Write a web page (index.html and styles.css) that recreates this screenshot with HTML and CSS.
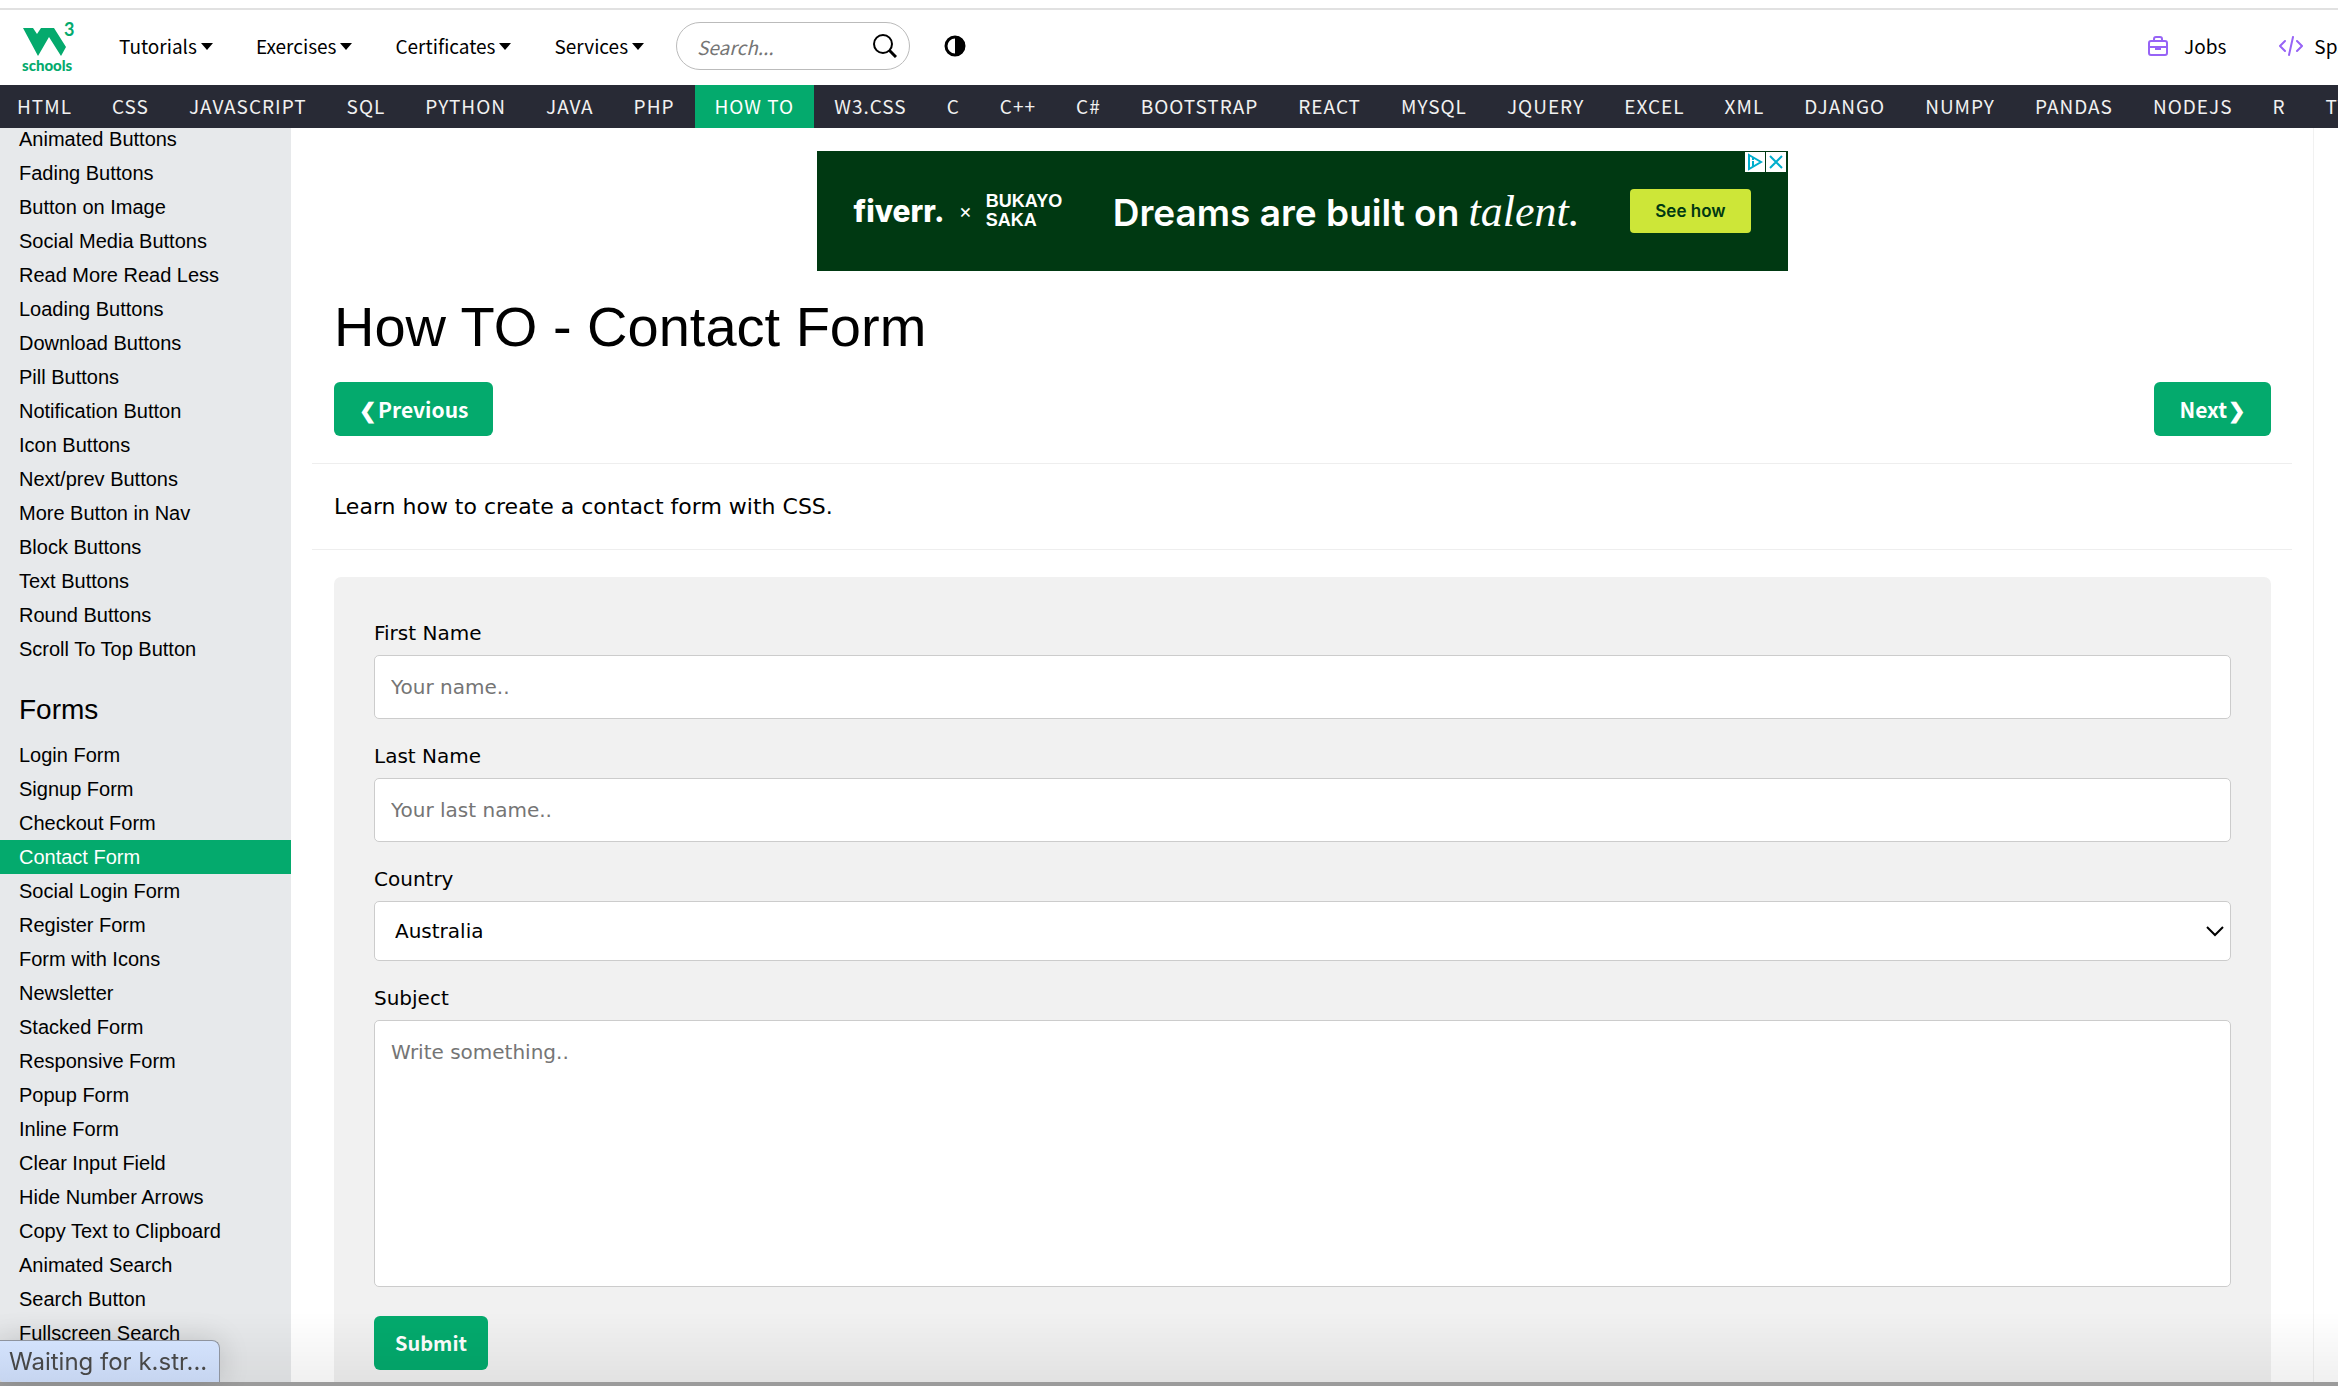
FILE: index.html
```html
<!DOCTYPE html>
<html lang="en">
<head>
<meta charset="utf-8">
<title>How To Create a Contact Form</title>
<link rel="stylesheet" href="styles.css">
</head>
<body>
<header class="topbar">
  <a href="#" class="logo" aria-label="W3Schools home">
    <svg width="56" height="60" viewBox="0 -4 56 60" fill="currentColor">
      <path d="M3 8h10l4 6 4-6h13l12 19-5 9-12-19-11 19z"/>
      <text x="44" y="16" class="logo-three">3</text>
      <text x="2" y="51" class="logo-name">schools</text>
    </svg>
  </a>
  <nav class="menu">
    <a href="#">Tutorials<i class="caret"></i></a>
    <a href="#">Exercises<i class="caret"></i></a>
    <a href="#">Certificates<i class="caret"></i></a>
    <a href="#">Services<i class="caret"></i></a>
  </nav>
  <form class="search">
    <input type="text" placeholder="Search..." aria-label="Search">
    <button type="button" aria-label="Search">
      <svg width="24" height="24" viewBox="0 0 24 24" fill="none" stroke="currentColor"><circle cx="10" cy="10" r="9" stroke-width="2"/><path d="M16 16l7 7" stroke-width="3"/></svg>
    </button>
  </form>
  <button class="theme" type="button" aria-label="Toggle dark mode">
    <svg width="22" height="22" viewBox="0 0 22 22"><circle cx="11" cy="11" r="9" fill="none" stroke="currentColor" stroke-width="3"/><path d="M11 1a10 10 0 0 1 0 20z" fill="currentColor"/></svg>
  </button>
  <nav class="shortcuts">
    <a href="#">
      <svg width="20" height="20" viewBox="0 0 20 20" fill="none" stroke="currentColor" stroke-width="2"><rect x="1" y="5" width="18" height="14" rx="2"/><path d="M6 5V3a2 2 0 0 1 2-2h4a2 2 0 0 1 2 2v2M1 11h18M8 11v2h4v-2"/></svg>Jobs</a>
    <a href="#" class="spaces">
      <svg width="26" height="20" viewBox="0 0 26 20" fill="none" stroke="currentColor" stroke-width="2" stroke-linecap="round" stroke-linejoin="round"><path d="M7 5l-5 5 5 5M19 5l5 5-5 5M15 1l-4 18"/></svg>Spaces</a>
  </nav>
</header>
<nav class="topics">
  <a href="#">HTML</a><a href="#">CSS</a><a href="#">JAVASCRIPT</a><a href="#">SQL</a><a href="#">PYTHON</a><a href="#">JAVA</a><a href="#">PHP</a><a href="#" class="active">HOW TO</a><a href="#">W3.CSS</a><a href="#">C</a><a href="#">C++</a><a href="#">C#</a><a href="#">BOOTSTRAP</a><a href="#">REACT</a><a href="#">MYSQL</a><a href="#">JQUERY</a><a href="#">EXCEL</a><a href="#">XML</a><a href="#">DJANGO</a><a href="#">NUMPY</a><a href="#">PANDAS</a><a href="#">NODEJS</a><a href="#">R</a><a href="#">TYPESCRIPT</a>
</nav>
<div class="page">
  <aside class="sidebar">
    <nav class="links">
      <a href="#">Animated Buttons</a>
      <a href="#">Fading Buttons</a>
      <a href="#">Button on Image</a>
      <a href="#">Social Media Buttons</a>
      <a href="#">Read More Read Less</a>
      <a href="#">Loading Buttons</a>
      <a href="#">Download Buttons</a>
      <a href="#">Pill Buttons</a>
      <a href="#">Notification Button</a>
      <a href="#">Icon Buttons</a>
      <a href="#">Next/prev Buttons</a>
      <a href="#">More Button in Nav</a>
      <a href="#">Block Buttons</a>
      <a href="#">Text Buttons</a>
      <a href="#">Round Buttons</a>
      <a href="#">Scroll To Top Button</a>
      <h2>Forms</h2>
      <a href="#">Login Form</a>
      <a href="#">Signup Form</a>
      <a href="#">Checkout Form</a>
      <a href="#" class="active">Contact Form</a>
      <a href="#">Social Login Form</a>
      <a href="#">Register Form</a>
      <a href="#">Form with Icons</a>
      <a href="#">Newsletter</a>
      <a href="#">Stacked Form</a>
      <a href="#">Responsive Form</a>
      <a href="#">Popup Form</a>
      <a href="#">Inline Form</a>
      <a href="#">Clear Input Field</a>
      <a href="#">Hide Number Arrows</a>
      <a href="#">Copy Text to Clipboard</a>
      <a href="#">Animated Search</a>
      <a href="#">Search Button</a>
      <a href="#">Fullscreen Search</a>
    </nav>
  </aside>
  <main class="content">
    <section class="ad" aria-label="Advertisement">
      <span class="fiverr">fiverr.</span>
      <span class="times">×</span>
      <span class="saka">BUKAYO<br>SAKA</span>
      <span class="slogan">Dreams are built on <em>talent.</em></span>
      <a href="#" class="see">See how</a>
      <span class="choices">
        <svg width="20" height="20" viewBox="0 0 20 20" fill="none" stroke="currentColor" stroke-width="2"><path d="M4 3l12 7-12 7zM8 9v5M8 6v2"/></svg>
        <svg width="20" height="20" viewBox="0 0 20 20" fill="none" stroke="currentColor" stroke-width="2"><path d="M4 4l12 12M16 4L4 16"/></svg>
      </span>
    </section>
    <h1>How TO - Contact Form</h1>
    <div class="pager">
      <a href="#" class="btn"><span>❮</span>Previous</a>
      <a href="#" class="btn">Next<span>❯</span></a>
    </div>
    <hr>
    <p class="intro">Learn how to create a contact form with CSS.</p>
    <hr>
    <form class="panel">
      <label for="fname">First Name</label>
      <input id="fname" type="text" placeholder="Your name..">
      <label for="lname">Last Name</label>
      <input id="lname" type="text" placeholder="Your last name..">
      <label for="country">Country</label>
      <div class="select">
        <select id="country"><option>Australia</option><option>Canada</option><option>USA</option></select>
        <svg width="18" height="12" viewBox="0 0 18 12" fill="none" stroke="currentColor" stroke-width="2"><path d="M1 1l8 8 8-8"/></svg>
      </div>
      <label for="subject">Subject</label>
      <textarea id="subject" placeholder="Write something.."></textarea>
      <button type="button" class="btn">Submit</button>
    </form>
  </main>
  <div class="gutter"></div>
</div>
<div class="shade"></div>
<div class="status">Waiting for k.str...</div>
</body>
</html>
```
FILE: styles.css
```css
* { box-sizing: border-box; }
body {
  margin: 0;
  height: 100vh;
  display: flex;
  flex-direction: column;
  overflow: hidden;
  border-top: 8px solid #fff;
  border-bottom: 4px solid #9b9b9b;
  background: #fff;
  color: #000;
  font: 20px/30px Verdana, "DejaVu Sans", sans-serif;
}
a { color: inherit; text-decoration: none; }
svg { display: block; flex: none; }
button { padding: 0; border: 0; background: none; color: inherit; }

.topbar, .topics, .btn, .search input {
  font-family: "Source Sans Pro", "Noto Sans CJK SC", sans-serif;
}

/* top bar */
.topbar {
  flex: none;
  display: flex;
  align-items: center;
  height: 77px;
  padding: 0 0 3px 20px;
  border-top: 2px solid #e1e1e1;
  font-size: 19px;
  white-space: nowrap;
}
.logo { color: #04aa6d; margin-right: 43px; }
.logo-three { font: 700 18px Lato, sans-serif; }
.logo-name { font: 900 15px Lato, sans-serif; }
.menu { display: flex; gap: 43px; }
.menu a { display: flex; align-items: center; gap: 4px; }
.caret {
  border: 6px solid transparent;
  border-top: 7px solid #000;
  border-bottom: 0;
}
.search {
  display: flex;
  align-items: center;
  width: 234px;
  height: 48px;
  margin-left: 32px;
  padding: 0 12px 0 20px;
  border: 1px solid #bbb;
  border-radius: 24px;
}
.search input {
  flex: 1;
  min-width: 0;
  padding: 0;
  border: 0;
  outline: 0;
  background: none;
  font-size: 19px;
  font-style: italic;
}
.search input::placeholder { color: #757575; }
.theme { margin-left: 34px; }
.shortcuts { display: flex; gap: 52px; margin-left: auto; width: 190px; }
.shortcuts a { display: flex; align-items: center; gap: 16px; }
.shortcuts .spaces { gap: 10px; }
.shortcuts svg { color: #9763f6; }

/* topics bar */
.topics {
  flex: none;
  display: flex;
  height: 43px;
  overflow: hidden;
  background: #282a35;
  color: #f1f1f1;
  font-size: 19px;
  line-height: 42px;
  letter-spacing: 1px;
  white-space: nowrap;
}
.topics a { padding: 0 20px; }
.topics a:first-child { padding-left: 17px; }
.topics .active { background: #04aa6d; color: #fff; }

/* page */
.page { flex: 1; min-height: 0; display: flex; overflow: hidden; }
.sidebar { flex: none; width: 291px; overflow: hidden; background: #e7e9eb; }
.links {
  display: flex;
  flex-direction: column;
  margin-top: -6px;
  font: 20px/34px Arial, "Liberation Sans", sans-serif;
}
.links a { padding: 0 19px; }
.links .active { background: #04aa6d; color: #fff; }
.links h2 { margin: 23px 19px 7px; font-size: 28px; font-weight: 400; line-height: 42px; }

.content { flex: 1; padding: 23px 21px 0; }
.gutter { flex: none; width: 25px; border-left: 1px solid #f1f1f1; }
.content > h1, .pager, .intro, .panel { margin-left: 22px; margin-right: 21px; }

.ad {
  position: relative;
  display: flex;
  align-items: center;
  width: 971px;
  height: 120px;
  margin: 0 auto;
  padding: 0 37px;
  background: #003912;
  color: #fff;
  font-family: Inter, sans-serif;
  white-space: nowrap;
}
.fiverr { font-size: 30px; font-weight: 800; }
.times { margin: 0 14px; font-size: 20px; }
.saka { font: 700 18px/19px "Liberation Sans", Arial, sans-serif; }
.slogan { margin: 0 auto; font-size: 37px; font-weight: 600; }
.slogan em { font: italic 44px "Liberation Serif", serif; }
.see {
  padding: 0 25px;
  border-radius: 4px;
  background: #cde638;
  color: #003912;
  font-size: 17px;
  font-weight: 600;
  line-height: 44px;
}
.choices { position: absolute; top: 1px; right: 2px; display: flex; gap: 1px; color: #00aecd; }
.choices svg { background: #fff; }

h1 { margin: 14px 0 13px; font: 400 56px/84px Arial, "Liberation Sans", sans-serif; }
.pager { display: flex; justify-content: space-between; }
.btn {
  padding: 0 25px;
  border-radius: 6px;
  background: #04aa6d;
  color: #fff;
  font-size: 21px;
  font-weight: 700;
  line-height: 54px;
}
.pager .btn { display: flex; gap: 1px; }
hr { margin: 27px 0; border: 0; border-top: 1px solid #eee; }
.intro { margin-top: 0; margin-bottom: 0; font-size: 22px; line-height: 31px; }

.panel {
  display: flex;
  flex-direction: column;
  padding: 41px 40px 60px;
  border-radius: 7px;
  background: #f1f1f1;
}
.panel label { line-height: 30px; margin-bottom: 7px; }
.panel input, .panel select, .panel textarea {
  width: 100%;
  margin: 0 0 22px;
  padding: 16px;
  border: 1px solid #ccc;
  border-radius: 5px;
  outline: 0;
  background: #fff;
  color: #000;
  font: inherit;
  resize: none;
}
.panel input { height: 64px; }
.panel ::placeholder { color: #757575; }
.select { display: grid; align-items: start; }
.select > * { grid-area: 1 / 1; }
.panel select { height: 60px; padding: 0 20px; appearance: none; }
.select svg { justify-self: end; margin: 25px 7px 0; pointer-events: none; }
.panel textarea { display: block; height: 267px; margin-bottom: 29px; }
.panel .btn { align-self: flex-start; padding: 0 21px; font-size: 20px; }

/* browser overlays */
.shade {
  position: fixed;
  inset: auto 0 4px;
  height: 70px;
  background: linear-gradient(transparent, rgba(0, 0, 0, .06));
  pointer-events: none;
}
.status {
  position: fixed;
  left: 0;
  bottom: 4px;
  width: 220px;
  padding: 0 9px;
  border: 1px solid #8f949e;
  border-width: 1px 1px 0 0;
  border-radius: 0 8px 0 4px;
  background: linear-gradient(#d3e2fc, #c6d5f0);
  box-shadow: 0 0 30px rgba(0, 0, 0, .15);
  color: #474747;
  font: 24px/41px Inter, sans-serif;
  white-space: nowrap;
}
```
